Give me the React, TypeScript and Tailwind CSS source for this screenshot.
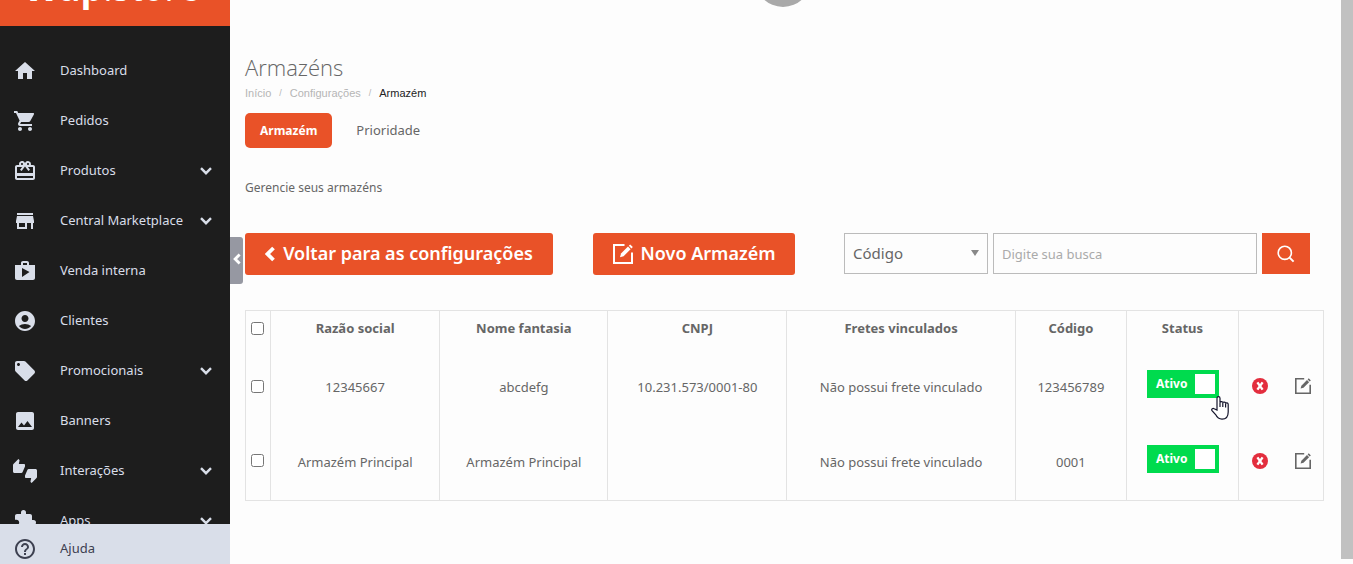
import React, { useState } from 'react'
import type { IconType } from 'react-icons'
import {
  MdAccountCircle,
  MdExtension,
  MdHelpOutline,
  MdHome,
  MdImage,
  MdLocalOffer,
  MdRedeem,
  MdShop,
  MdShoppingCart,
  MdStore,
  MdThumbsUpDown,
} from 'react-icons/md'

interface MenuItem {
  label: string
  icon: IconType
  expandable?: boolean
}

interface Warehouse {
  id: number
  companyName: string
  tradeName: string
  cnpj: string
  freight: string
  code: string
}

const menu: MenuItem[] = [
  { label: 'Dashboard', icon: MdHome },
  { label: 'Pedidos', icon: MdShoppingCart },
  { label: 'Produtos', icon: MdRedeem, expandable: true },
  { label: 'Central Marketplace', icon: MdStore, expandable: true },
  { label: 'Venda interna', icon: MdShop },
  { label: 'Clientes', icon: MdAccountCircle },
  { label: 'Promocionais', icon: MdLocalOffer, expandable: true },
  { label: 'Banners', icon: MdImage },
  { label: 'Interações', icon: MdThumbsUpDown, expandable: true },
  { label: 'Apps', icon: MdExtension, expandable: true },
]

const warehouses: Warehouse[] = [
  {
    id: 1,
    companyName: '12345667',
    tradeName: 'abcdefg',
    cnpj: '10.231.573/0001-80',
    freight: 'Não possui frete vinculado',
    code: '123456789',
  },
  {
    id: 2,
    companyName: 'Armazém Principal',
    tradeName: 'Armazém Principal',
    cnpj: '',
    freight: 'Não possui frete vinculado',
    code: '0001',
  },
]

const EditIcon: React.FC<{ className: string }> = ({ className }) => (
  <svg viewBox="0 0 20 20" className={className} fill="none" aria-hidden="true">
    <path d="M11.5 1H1v18h18V8.5" stroke="currentColor" strokeWidth="2" />
    <path d="M7 13.2l1-3.6 7-7 2.6 2.6-7 7z" fill="currentColor" />
    <path d="M15.8 1.8L17.2.4 19.8 3l-1.4 1.4z" fill="currentColor" />
  </svg>
)

const ChevronLeft: React.FC<{ className: string }> = ({ className }) => (
  <svg viewBox="0 0 10 16" className={className} fill="none" aria-hidden="true">
    <path d="M8.5 2L2.5 8l6 6" stroke="currentColor" strokeWidth="3.8" />
  </svg>
)

const ChevronDown: React.FC = () => (
  <svg viewBox="0 0 12 8" className="h-2 w-3 shrink-0" fill="none" aria-hidden="true">
    <path d="M1 1.2l5 5 5-5" stroke="currentColor" strokeWidth="2.4" />
  </svg>
)

const Sidebar: React.FC = () => (
  <aside className="flex h-full w-[230px] shrink-0 flex-col bg-[#1d1d1d] text-[#d9dee9]">
    <div className="flex h-[26px] shrink-0 items-end overflow-hidden bg-[#e95228] pl-6">
      <span className="mb-[26px] font-['Open_Sans',sans-serif] text-[36px] leading-6 text-white">
        <b>Wap</b>.store
      </span>
    </div>
    <nav className="min-h-0 flex-1 overflow-hidden pt-5">
      {menu.map(({ label, icon: Icon, expandable }) => (
        <a key={label} href="#" className="flex h-[50px] items-center pl-[13px] pr-[18px]">
          <Icon className="h-6 w-6 shrink-0" />
          <span className="ml-[23px] flex-1 whitespace-nowrap">{label}</span>
          {expandable && <ChevronDown />}
        </a>
      ))}
    </nav>
    <a href="#" className="flex h-10 shrink-0 items-center bg-[#d9dee9] pl-[13px] pt-[10px] text-[#3d4050]">
      <MdHelpOutline className="h-6 w-6" />
      <span className="ml-[23px]">Ajuda</span>
    </a>
  </aside>
)

const StatusToggle: React.FC<{ name: string }> = ({ name }) => {
  const [active, setActive] = useState(true)

  return (
    <button
      role="switch"
      aria-checked={active}
      aria-label={`Status de ${name}`}
      onClick={() => setActive(!active)}
      className={`flex h-7 w-[72px] items-center justify-between pl-[9px] pr-1 text-[12px] font-bold text-white ${
        active ? 'bg-[#00db4e]' : 'bg-gray-400'
      }`}
    >
      <span>{active ? 'Ativo' : 'Inativo'}</span>
      <span className="h-5 w-5 bg-white" />
    </button>
  )
}

const checkbox = 'block h-[13px] w-[13px]'

const WarehouseTable: React.FC = () => (
  <table className="mt-[35px] w-full table-fixed border-collapse border border-[#e3e3e3] text-center">
    <colgroup>
      <col className="w-[25px]" />
      <col className="w-[15.7%]" />
      <col className="w-[15.6%]" />
      <col className="w-[16.6%]" />
      <col className="w-[21.2%]" />
      <col className="w-[10.3%]" />
      <col className="w-[10.4%]" />
      <col />
    </colgroup>
    <thead>
      <tr className="h-10 *:border-x *:border-[#e3e3e3] *:pb-1">
        <th className="pl-[5px]">
          <input type="checkbox" aria-label="Selecionar todos" className={checkbox} />
        </th>
        <th>Razão social</th>
        <th>Nome fantasia</th>
        <th>CNPJ</th>
        <th>Fretes vinculados</th>
        <th>Código</th>
        <th>Status</th>
        <td />
      </tr>
    </thead>
    <tbody>
      {warehouses.map(item => (
        <tr key={item.id} className="h-[75px] *:border-x *:border-[#e3e3e3]">
          <td className="pb-1 pl-[5px]">
            <input type="checkbox" aria-label={`Selecionar ${item.companyName}`} className={checkbox} />
          </td>
          <td>{item.companyName}</td>
          <td>{item.tradeName}</td>
          <td>{item.cnpj}</td>
          <td>{item.freight}</td>
          <td>{item.code}</td>
          <td className="pb-2">
            <div className="flex justify-center pl-px">
              <StatusToggle name={item.companyName} />
            </div>
          </td>
          <td className="pb-1">
            <div className="flex items-center justify-center gap-[27px]">
              <button aria-label={`Excluir ${item.companyName}`}>
                <svg viewBox="0 0 16 16" className="h-4 w-4" aria-hidden="true">
                  <circle cx="8" cy="8" r="8" fill="#e32e3e" />
                  <path d="M5.4 4.4l5.2 7.2M10.6 4.4l-5.2 7.2" stroke="#fff" strokeWidth="2.4" />
                </svg>
              </button>
              <button aria-label={`Editar ${item.companyName}`}>
                <EditIcon className="h-4 w-4" />
              </button>
            </div>
          </td>
        </tr>
      ))}
    </tbody>
  </table>
)

export default function App() {
  return (
    <div className="flex h-screen overflow-hidden bg-[#fdfdfd] font-['Noto_Sans',sans-serif] text-[13px] text-[#666]">
      <Sidebar />

      <main className="relative min-w-0 flex-1 pl-[15px] pr-[17px]">
        {/* Avatar, scrolled almost out of view */}
        <div className="flex h-[7px] items-end justify-center overflow-hidden pr-1">
          <span className="h-14 w-14 shrink-0 rounded-full bg-[#a9a9a9]" />
        </div>

        <button
          aria-label="Recolher menu"
          className="absolute left-0 top-[237px] flex h-[47px] w-[13px] items-center justify-center rounded-r-[3px] bg-[#9698a2] pb-1 text-white"
        >
          <ChevronLeft className="h-3 w-2" />
        </button>

        <h1 className="mt-11 font-['Open_Sans',sans-serif] text-[22px] font-light leading-8">Armazéns</h1>
        <nav
          aria-label="Trilha"
          className="mt-[2px] flex gap-2 font-['Liberation_Sans',sans-serif] text-[11px] leading-4 text-[#b5b5b5]"
        >
          <a href="#">Início</a>
          <span className="text-[9px]">/</span>
          <a href="#">Configurações</a>
          <span className="text-[9px]">/</span>
          <span className="text-[#222]">Armazém</span>
        </nav>

        <div className="mt-3 flex h-[35px] gap-[10px]">
          <button className="rounded-[5px] bg-[#e95228] px-[15px] text-[12px] font-bold text-white">Armazém</button>
          <button className="px-[14px] text-[13px]">Prioridade</button>
        </div>

        <p className="mt-[30px] text-[12px] leading-5">Gerencie seus armazéns</p>

        <div className="mt-[35px] flex items-start pr-[14px]">
          <a
            href="#"
            className="flex h-[42px] w-[308px] items-center justify-center gap-2 rounded-[3px] bg-[#e95228] pb-px text-[18px] font-semibold text-white"
          >
            <ChevronLeft className="h-4 w-[10px]" />
            Voltar para as configurações
          </a>
          <button className="ml-10 flex h-[42px] w-[202px] items-center justify-center gap-2 rounded-[3px] bg-[#e95228] pb-px text-[18px] font-semibold text-white">
            <EditIcon className="h-5 w-5" />
            Novo Armazém
          </button>

          <form className="ml-[49px] flex flex-1 gap-[5px]" onSubmit={e => e.preventDefault()}>
            <div className="relative">
              <select
                aria-label="Buscar por"
                className="h-[41px] w-[144px] appearance-none border border-[#bbb] pl-2 text-[15px]"
              >
                <option>Código</option>
                <option>Razão social</option>
                <option>CNPJ</option>
              </select>
              <svg
                viewBox="0 0 8 6"
                className="pointer-events-none absolute right-[9px] top-[17px] h-[6px] w-2"
                aria-hidden="true"
              >
                <path d="M0 0h8L4 6z" fill="#888" />
              </svg>
            </div>
            <input
              type="text"
              aria-label="Busca"
              placeholder="Digite sua busca"
              className="h-[41px] min-w-0 flex-1 border border-[#bbb] px-2 text-[13px] placeholder:text-[#aaa]"
            />
            <button aria-label="Buscar" className="flex h-[41px] w-12 items-center justify-center bg-[#e95228] text-white">
              <svg viewBox="0 0 18 18" className="h-[18px] w-[18px]" fill="none" aria-hidden="true">
                <circle cx="7.8" cy="7.8" r="6.6" stroke="currentColor" strokeWidth="1.6" />
                <path d="M12.6 12.6l4 4" stroke="currentColor" strokeWidth="2" />
              </svg>
            </button>
          </form>
        </div>

        <WarehouseTable />
      </main>

      {/* Scrollbar */}
      <div className="w-3 shrink-0 pb-[5px]">
        <div className="h-full bg-[#c1c1c1]" />
      </div>

      {/* Hand pointer */}
      <svg viewBox="0 0 18 24" className="absolute left-[1211px] top-[396px] h-6 w-[18px]" aria-hidden="true">
        <path
          d="M6 14V2.200C6 .2 9 .2 9 2.200V6.500c.3-1.400 2.800-1.200 2.800.3.4-1.200 2.800-1 2.800.6.5-1 2.600-.7 2.600 1V16c0 4-2 7.200-6.200 7.200-3.800 0-5.200-2.200-6.400-4.600L1 14.600c-1-1.600 1-2.800 2.200-1.800z"
          fill="#fff"
          stroke="#14142b"
          strokeWidth="1.2"
        />
        <path d="M9 6.500v4.500M11.800 7v4M14.600 7.500v4" stroke="#14142b" strokeWidth="1.2" />
      </svg>
    </div>
  )
}
